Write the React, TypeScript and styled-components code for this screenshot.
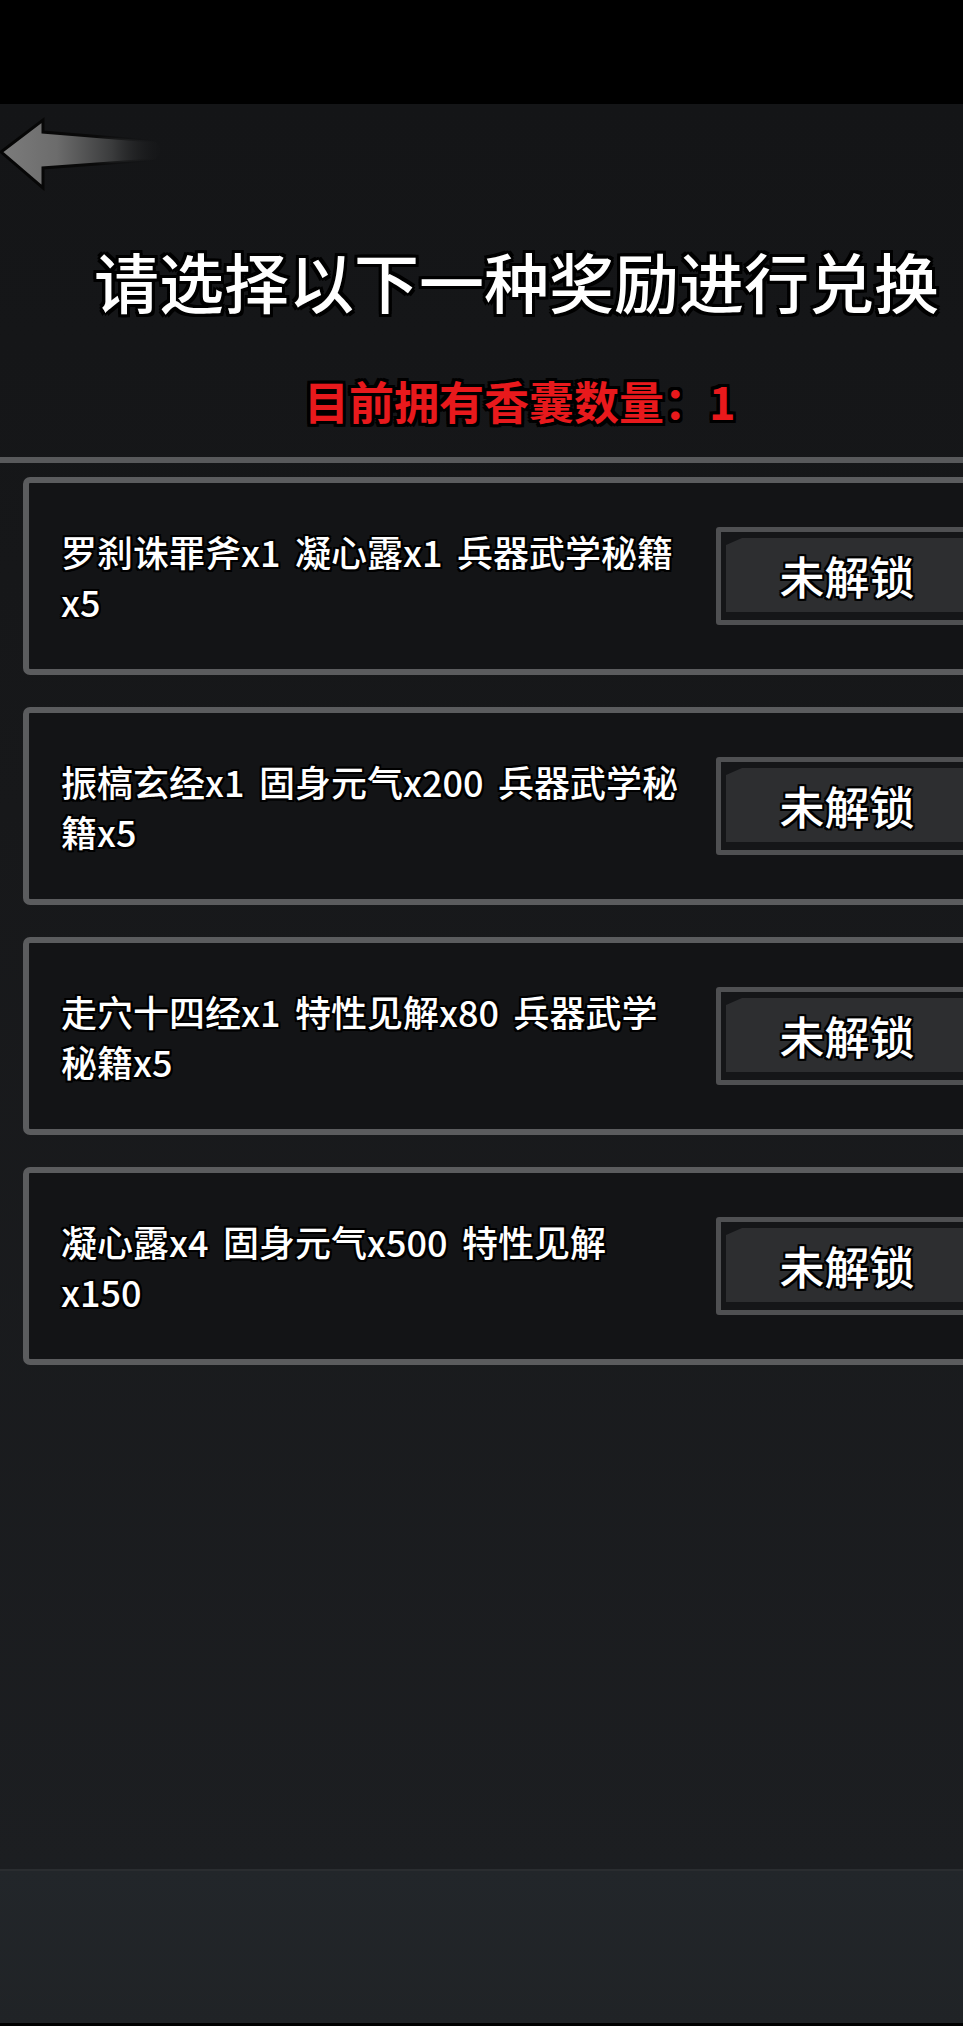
import React from 'react'
import styled, { createGlobalStyle } from 'styled-components'

const GlobalStyle = createGlobalStyle`
  html, body {
    margin: 0;
    padding: 0;
    background: #000;
    overflow-x: hidden;
  }
  body {
    font-family: "Noto Sans CJK SC", "Noto Sans", sans-serif;
  }
`

const outline = (w: number) =>
  [
    `0 0 ${w}px #000`,
    `${w}px 0 0 #000`,
    `-${w}px 0 0 #000`,
    `0 ${w}px 0 #000`,
    `0 -${w}px 0 #000`,
    `${w}px ${w}px 0 #000`,
    `-${w}px -${w}px 0 #000`,
    `${w}px -${w}px 0 #000`,
    `-${w}px ${w}px 0 #000`,
  ].join(', ')

const Screen = styled.div`
  width: 963px;
  height: 2026px;
  display: flex;
  flex-direction: column;
  overflow: hidden;
`

const StatusBar = styled.div`
  height: 104px;
  flex: 0 0 104px;
  background: #000;
`

const Content = styled.div`
  flex: 1;
  display: flex;
  flex-direction: column;
  background: linear-gradient(180deg, #141517 0%, #17181a 40%, #1c1e21 100%);
`

const BackButton = styled.div`
  margin-top: 12px;
  width: 170px;
  height: 76px;
  cursor: pointer;
`

const Title = styled.h1`
  margin: 50px 0 0;
  padding-left: 94px;
  font-size: 65px;
  line-height: 76px;
  font-weight: 500;
  color: #fff;
  white-space: nowrap;
  text-shadow: ${outline(3)};
`

const Owned = styled.div`
  margin-top: 54px;
  padding-left: 304px;
  font-size: 45px;
  line-height: 58px;
  font-weight: 700;
  color: #e8191c;
  white-space: nowrap;
  text-shadow: ${outline(3)};
`

const Divider = styled.div`
  margin-top: 27px;
  height: 6px;
  background: #58595b;
`

const List = styled.div`
  margin-top: 14px;
  display: flex;
  flex-direction: column;
  gap: 32px;
  padding-left: 23px;
`

const Card = styled.div`
  box-sizing: border-box;
  width: 970px;
  height: 198px;
  border: 6px solid #5b5c5e;
  border-radius: 7px;
  background: #131416;
  display: flex;
  align-items: center;
  gap: 32px;
  padding-left: 32px;
`

const Rewards = styled.div`
  flex: 0 0 623px;
  font-size: 36px;
  line-height: 50px;
  font-weight: 500;
  word-spacing: 0.18em;
  color: #fff;
  text-shadow: ${outline(2)};
`

const LockButton = styled.button`
  box-sizing: border-box;
  flex: 0 0 262px;
  height: 98px;
  padding: 6px 5px 8px 5px;
  border: 5px solid #4f5052;
  border-radius: 3px;
  background: #151618;
  display: flex;
  cursor: default;
`

const LockFace = styled.span`
  flex: 1;
  display: flex;
  align-items: center;
  justify-content: center;
  background: #2d2e30;
  clip-path: polygon(16px 0, 100% 0, 100% 100%, 0 100%, 0 7px);
  font-family: "Noto Sans CJK SC", sans-serif;
  font-size: 45px;
  font-weight: 500;
  color: #fff;
  text-shadow: ${outline(2)};
`

const BottomBar = styled.div`
  flex: 0 0 154px;
  box-sizing: border-box;
  border-top: 2px solid #2a2d30;
  background: linear-gradient(180deg, #22262a 0%, #202326 100%);
`

const BottomEdge = styled.div`
  flex: 0 0 3px;
  background: #000;
`

const BackArrow = () => (
  <svg width="170" height="76" viewBox="0 0 170 76">
    <defs>
      <linearGradient id="arrowFill" x1="0" y1="0" x2="1" y2="0">
        <stop offset="0" stopColor="#7c7c7c" />
        <stop offset="0.35" stopColor="#6c6c6c" />
        <stop offset="0.7" stopColor="#3a3b3c" />
        <stop offset="1" stopColor="#17181a" stopOpacity="0.2" />
      </linearGradient>
      <linearGradient id="arrowEdge" x1="0" y1="0" x2="1" y2="0">
        <stop offset="0" stopColor="#050505" />
        <stop offset="0.6" stopColor="#0a0a0a" />
        <stop offset="1" stopColor="#141517" stopOpacity="0" />
      </linearGradient>
    </defs>
    <path
      d="M1 36 L43 4 L43 16 L152 25 Q160 26 160 35 Q160 43 152 44 L43 52 L43 72 Z"
      fill="url(#arrowFill)"
      stroke="url(#arrowEdge)"
      strokeWidth="3"
      strokeLinejoin="miter"
    />
  </svg>
)

const rewards = [
  '罗刹诛罪斧x1 凝心露x1 兵器武学秘籍x5',
  '振槁玄经x1 固身元气x200 兵器武学秘籍x5',
  '走穴十四经x1 特性见解x80 兵器武学秘籍x5',
  '凝心露x4 固身元气x500 特性见解x150',
]

export default function App() {
  return (
    <>
      <GlobalStyle />
      <Screen>
        <StatusBar />
        <Content>
          <BackButton>
            <BackArrow />
          </BackButton>
          <Title>请选择以下一种奖励进行兑换</Title>
          <Owned>目前拥有香囊数量：1</Owned>
          <Divider />
          <List>
            {rewards.map((r) => (
              <Card key={r}>
                <Rewards>{r}</Rewards>
                <LockButton>
                  <LockFace>未解锁</LockFace>
                </LockButton>
              </Card>
            ))}
          </List>
        </Content>
        <BottomBar />
        <BottomEdge />
      </Screen>
    </>
  )
}
